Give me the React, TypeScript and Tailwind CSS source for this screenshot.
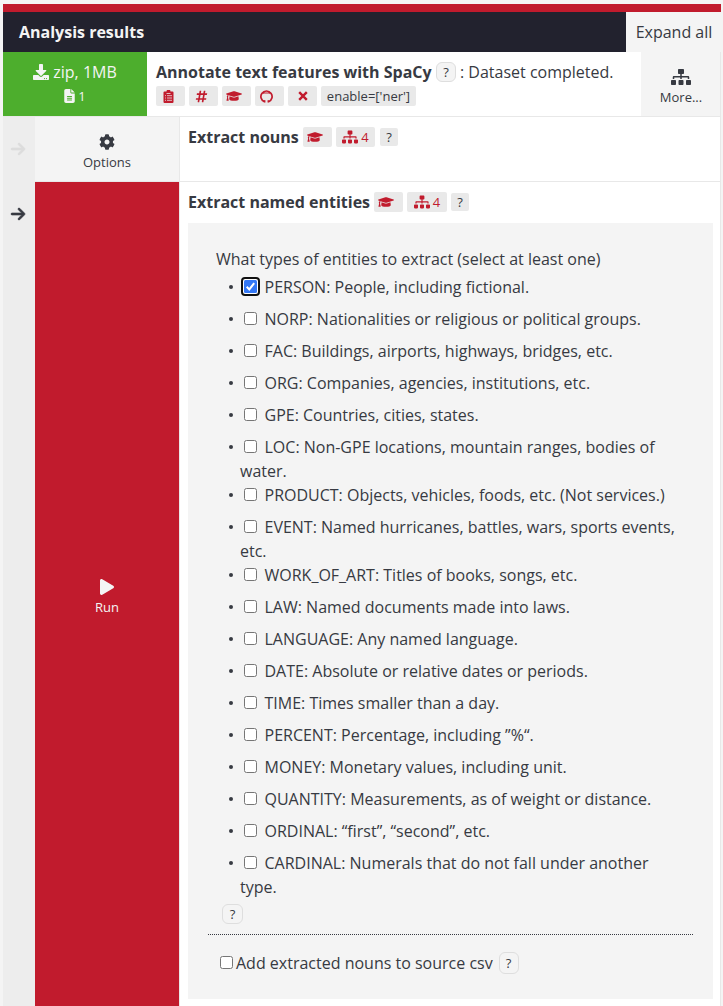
import React from "react";
import { FaDownload, FaSitemap, FaCog, FaPlay, FaGraduationCap, FaHashtag } from "react-icons/fa";
import { FaArrowRight, FaFileLines } from "react-icons/fa6";

type Entity = { name: string; lines: string[]; on?: boolean };

const entities: Entity[] = [
  { name: "person", lines: ["PERSON: People, including fictional."], on: true },
  { name: "norp", lines: ["NORP: Nationalities or religious or political groups."] },
  { name: "fac", lines: ["FAC: Buildings, airports, highways, bridges, etc."] },
  { name: "org", lines: ["ORG: Companies, agencies, institutions, etc."] },
  { name: "gpe", lines: ["GPE: Countries, cities, states."] },
  { name: "loc", lines: ["LOC: Non-GPE locations, mountain ranges, bodies of", "water."] },
  { name: "product", lines: ["PRODUCT: Objects, vehicles, foods, etc. (Not services.)"] },
  { name: "event", lines: ["EVENT: Named hurricanes, battles, wars, sports events,", "etc."] },
  { name: "art", lines: ["WORK_OF_ART: Titles of books, songs, etc."] },
  { name: "law", lines: ["LAW: Named documents made into laws."] },
  { name: "language", lines: ["LANGUAGE: Any named language."] },
  { name: "date", lines: ["DATE: Absolute or relative dates or periods."] },
  { name: "time", lines: ["TIME: Times smaller than a day."] },
  { name: "percent", lines: ["PERCENT: Percentage, including ”%“."] },
  { name: "money", lines: ["MONEY: Monetary values, including unit."] },
  { name: "quantity", lines: ["QUANTITY: Measurements, as of weight or distance."] },
  { name: "ordinal", lines: ["ORDINAL: “first”, “second”, etc."] },
  { name: "cardinal", lines: ["CARDINAL: Numerals that do not fall under another", "type."] },
];

function GithubMark() {
  return (
    <svg width="13" height="13" viewBox="0 0 13 13" fill="none" stroke="currentColor">
      <path d="M4.4 11.8A5.6 5.6 0 1 1 8.6 11.8" strokeWidth="1.7" />
      <path d="M4.7 12.6v-2.4M8.3 12.6v-2.4" strokeWidth="1.5" />
      <path d="M4.6 11c-1.2.2-1.6-.4-2.1-1.2" strokeWidth="1" />
      <path d="M3.1 1.6 5 2.4h3l1.9-.8.5 2.6-1.2-.6H3.8l-1.2.6z" fill="currentColor" stroke="none" />
    </svg>
  );
}

function ClipboardMark() {
  return (
    <svg width="11" height="13" viewBox="0 0 11 13">
      <path d="M1.5 1.5h2a2 2 0 0 1 4 0h2q1 0 1 1V12q0 1-1 1h-8q-1 0-1-1V2.500q0-1 1-1z" fill="currentColor" />
      <path d="M3.500 3.500h4M2 5.700h1M4 5.700h5M2 8h1M4 8h5M2 10.300h1M4 10.300h5" stroke="#e9e9e9" strokeWidth=".8" />
    </svg>
  );
}

function CrossMark() {
  return (
    <svg width="10" height="10" viewBox="0 0 10 10">
      <path d="M1.200 1.200 8.800 8.800M8.800 1.200 1.200 8.800" stroke="currentColor" strokeWidth="2.400" />
    </svg>
  );
}

function Tag({ children, className = "w-[29px] pr-1" }: { children: React.ReactNode; className?: string }) {
  return (
    <span className={`flex h-5 shrink-0 items-center justify-center rounded-[2px] bg-[#e9e9e9] text-[13px] text-[#c11b2d] ${className}`}>
      {children}
    </span>
  );
}

function Help({ className = "" }: { className?: string }) {
  return (
    <span className={`flex h-5 w-5 shrink-0 items-center justify-center rounded-[6px] border border-[#dedede] bg-[#f4f4f4] text-[13px] ${className}`}>
      ?
    </span>
  );
}

function Box({ on = false }: { on?: boolean }) {
  return on ? (
    <span className="-mx-[3px] mb-[2px] flex h-[19px] w-[19px] shrink-0 items-center justify-center rounded-[4px] border-2 border-[#101010] bg-white">
      <svg width="13" height="13" viewBox="0 0 13 13">
        <rect width="13" height="13" rx="1.5" fill="#3478f6" />
        <path d="M2.7 6.8 5.3 9.4 10.2 3.2" fill="none" stroke="white" strokeWidth="2" />
      </svg>
    </span>
  ) : (
    <span className="mb-[2px] h-[13px] w-[13px] shrink-0 rounded-[2.5px] border border-[#767676] bg-white" />
  );
}

function StepTitle({ title, wide = false }: { title: string; wide?: boolean }) {
  return (
    <div className="flex h-5 items-center">
      <span className={`shrink-0 font-bold ${wide ? "w-[186px]" : "w-[115px]"}`}>{title}</span>
      <Tag className="w-[29px] pr-[5px]">
        <FaGraduationCap size={16} />
      </Tag>
      <Tag className={`ml-1 gap-[3px] ${wide ? "w-10" : "w-[39px]"}`}>
        <FaSitemap size={16} className="h-[14px]" />4
      </Tag>
      <span className={`flex h-[18px] w-[18px] items-center justify-center rounded-[2px] bg-[#e9e9e9] text-[13px] ${wide ? "ml-1" : "ml-[5px]"}`}>
        ?
      </span>
    </div>
  );
}

export default function App() {
  return (
    <div className="h-[1006px] w-[723px] overflow-hidden bg-[#f4f4f4] pt-1 pr-[2px] pl-[3px] font-['Open_Sans',sans-serif] text-base leading-6 text-[#373a42]">
      <div className="flex h-full flex-col border-r border-[#e8e8e8] bg-white">
        <div className="-mr-px h-2 shrink-0 bg-[#c11b2d]" />
        <header className="flex h-10 shrink-0 bg-[#22222e]">
          <h1 className="flex-1 pt-2 pl-4 font-bold text-[#f4f4f4]">Analysis results</h1>
          <button className="-mr-px w-[95px] bg-[#f4f4f4] pl-px text-center whitespace-nowrap">Expand all</button>
        </header>

        <section className="flex h-[65px] shrink-0 border-b border-[#e8e8e8]">
          <div className="h-16 w-36 bg-[#4dae2d] text-[#f4f4f4]">
            <div className="flex h-10 items-center justify-center gap-1">
              <FaDownload size={16} />
              <span>zip, 1MB</span>
            </div>
            <div className="flex h-2 items-center justify-center gap-1 text-[13px]">
              <FaFileLines size={14} className="w-[11px]" />
              <span className="-ml-px">1</span>
            </div>
          </div>
          <div className="flex-1 pt-[8px] pl-[9px]">
            <div className="flex h-6 items-center whitespace-nowrap">
              <span className="w-[280px] shrink-0 font-bold">Annotate text features with SpaCy</span>
              <Help />
              <span className="pl-1">: Dataset completed.</span>
            </div>
            <div className="mt-[2px] flex gap-1">
              <Tag className="w-[29px] pr-[5px]"><ClipboardMark /></Tag>
              <Tag className="w-[29px] pr-[5px]"><FaHashtag size={13} /></Tag>
              <Tag className="w-[29px] pr-[5px]"><FaGraduationCap size={16} /></Tag>
              <Tag className="w-[29px] pr-[6px]"><GithubMark /></Tag>
              <Tag className="w-[29px]"><CrossMark /></Tag>
              <Tag className="w-[95px] text-[#373a42]!">enable=['ner']</Tag>
            </div>
          </div>
          <div className="flex w-[79px] flex-col items-center bg-[#f4f4f4] pt-[17px] pl-px text-[13px]">
            <FaSitemap size={20} className="h-4" />
            <span>More...</span>
          </div>
        </section>

        <main className="flex min-h-0 flex-1">
          <aside className="w-8 shrink-0 bg-[#ededed]">
            <div className="flex h-16 items-center justify-center pr-[2px] text-[#dcdcdc]">
              <FaArrowRight size={16} strokeWidth={20} stroke="currentColor" />
            </div>
            <div className="flex h-[65px] items-center justify-center pr-[2px]">
              <FaArrowRight size={16} strokeWidth={20} stroke="currentColor" />
            </div>
          </aside>
          <div className="flex w-[145px] shrink-0 flex-col border-r border-[#e8e8e8]">
            <button className="flex h-[65px] shrink-0 flex-col items-center border-b border-[#e8e8e8] bg-[#f4f4f4] pt-[17px] text-[13px]">
              <FaCog size={16} />
              <span>Options</span>
            </button>
            <button className="flex flex-1 flex-col items-center bg-[#c11b2d] pt-[397px] text-[13px] text-[#f4f4f4]">
              <FaPlay size={16} />
              <span>Run</span>
            </button>
          </div>
          <div className="min-w-0 flex-1">
            <div className="h-[65px] border-b border-[#e8e8e8] pt-[10px] pl-2">
              <StepTitle title="Extract nouns" />
            </div>
            <div className="pt-[10px] pr-[7px] pl-2">
              <StepTitle title="Extract named entities" wide />
              <div className="mt-[11px] h-[776px] bg-[#f4f4f4] px-5 pt-6">
                <p className="pl-2">What types of entities to extract (select at least one)</p>
                <ul>
                  {entities.map((e) => (
                    <li key={e.name} className={e.lines.length > 1 ? "h-12" : e.name === "person" ? "mt-1 h-8" : "h-8"}>
                      <label className="flex h-6 items-center whitespace-nowrap">
                        <span className="ml-[21px] w-[15px] shrink-0">
                          <span className="block h-1 w-1 rounded-full bg-[#373a42]" />
                        </span>
                        <Box on={e.on} />
                        <span className="pl-[7.5px]">{e.lines[0]}</span>
                      </label>
                      {e.lines[1] && <p className="pl-8">{e.lines[1]}</p>}
                    </li>
                  ))}
                </ul>
                <Help className="mt-[5px] ml-[14px] w-[21px]!" />
                <div className="mt-[10px] border-t border-dotted border-[#373a42]" />
                <label className="mt-4 flex h-6 items-center pl-3">
                  <Box />
                  <span className="pl-[3px]">Add extracted nouns to source csv</span>
                  <Help className="ml-[6px] h-[22px]!" />
                </label>
              </div>
            </div>
          </div>
        </main>
      </div>
    </div>
  );
}
